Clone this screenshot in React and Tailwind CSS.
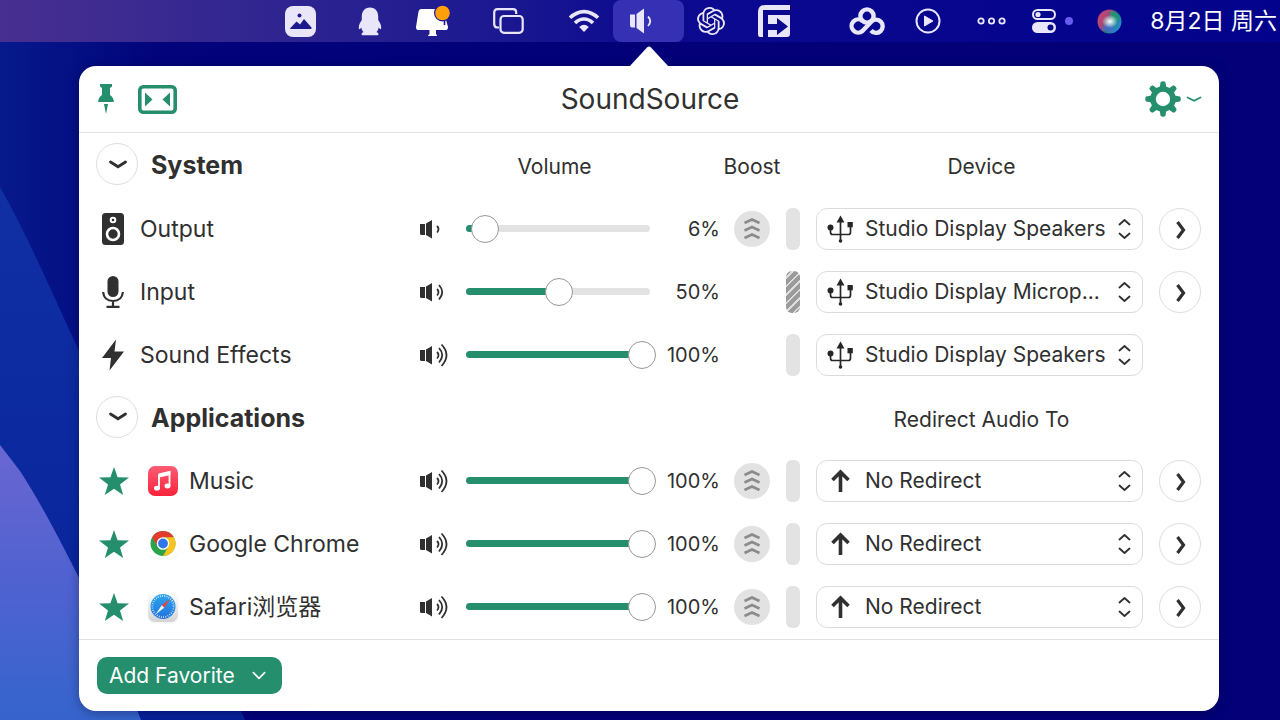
import { useState } from 'react'
import { SiOpenai } from 'react-icons/si'

const systemRows = [
  { id: 'output', label: 'Output', icon: 'speaker', volume: 6, boost: true, meter: 'idle', device: 'Studio Display Speakers', more: true },
  { id: 'input', label: 'Input', icon: 'mic', volume: 50, boost: false, meter: 'off', device: 'Studio Display Microp...', more: true },
  { id: 'effects', label: 'Sound Effects', icon: 'bolt', volume: 100, boost: false, meter: 'idle', device: 'Studio Display Speakers', more: false },
]

const appRows = [
  { id: 'music', label: 'Music', app: 'music', volume: 100 },
  { id: 'chrome', label: 'Google Chrome', app: 'chrome', volume: 100 },
  { id: 'safari', label: 'Safari浏览器', app: 'safari', volume: 100 },
]

const rowGrid = 'grid grid-cols-[minmax(0,1fr)_41px_195px_64px_64px_32px_327px_58px] items-center'

const Wallpaper = () => (
  <svg className="absolute inset-0 -z-10 h-full w-full" viewBox="0 0 1280 720" preserveAspectRatio="none" aria-hidden="true">
    <defs>
      <linearGradient id="wallBase" x1="0" y1="0" x2="1" y2="0">
        <stop offset="0" stopColor="#061a8c" />
        <stop offset="0.12" stopColor="#02047c" />
        <stop offset="0.5" stopColor="#030078" />
        <stop offset="1" stopColor="#030078" />
      </linearGradient>
      <linearGradient id="wallMid" x1="0" y1="0" x2="0" y2="1">
        <stop offset="0" stopColor="#1030a4" />
        <stop offset="1" stopColor="#07229a" />
      </linearGradient>
      <linearGradient id="wallFront" x1="0" y1="0" x2="0" y2="1">
        <stop offset="0" stopColor="#6a66d2" />
        <stop offset="0.5" stopColor="#4f62d0" />
        <stop offset="1" stopColor="#3565cc" />
      </linearGradient>
    </defs>
    <rect width="1280" height="720" fill="url(#wallBase)" />
    <path d="M0 187C30 240 55 300 80 353C130 450 190 590 245 720H0Z" fill="url(#wallMid)" />
    <path d="M0 445L20 471C45 510 65 550 80 580C105 630 125 680 141 720H0Z" fill="url(#wallFront)" />
  </svg>
)

const MenuBar = () => (
  <header className="flex h-[42px] items-center justify-end bg-linear-to-r from-[#472f90] via-[#0d0a90] via-50% to-[#02028c] pr-[3px] text-[#e8e6f8]">
    <button aria-label="Photos" className="mr-[42px]">
      <svg width="31" height="31" viewBox="0 0 31 31">
        <rect width="31" height="31" rx="8" fill="currentColor" />
        <circle cx="14.500" cy="9.500" r="2" fill="#1d1a8e" />
        <path d="M5 22.500L11.500 15.500L15 18.500L19 13L26.500 21.500Q27 23 25.500 23H5.500Z" fill="#1d1a8e" />
      </svg>
    </button>
    <button aria-label="Chat" className="mr-[34px]">
      <svg width="24" height="29" viewBox="0 0 24 29">
        <path d="M12 0.500C6.500 0.500 3.800 4.500 3.800 9.500V13C2 15.500 0.500 18.500 0.800 21.500C1 23 2.200 22 3.300 20.500C3.700 22.500 4.500 24 5.500 25C3.500 25.800 3 27 4 28.300H20C21 27 20.500 25.800 18.500 25C19.500 24 20.300 22.500 20.700 20.500C21.800 22 23 23 23.200 21.500C23.500 18.500 22 15.500 20.200 13V9.500C20.200 4.500 17.500 0.500 12 0.500Z" fill="currentColor" />
      </svg>
    </button>
    <button aria-label="Display" className="mr-[43px]">
      <svg width="34" height="32" viewBox="0 0 34 32">
        <path d="M5 4H27L32 22Q32 25 30 25H20V29Q21 30 21 31H12Q12 30 13.500 29V25H2Q0 25 0 22L2.500 6.500Q3 4 5 4Z" fill="#fff" />
        <path d="M28.500 15V20" stroke="#1b178f" strokeWidth="1.600" />
        <circle cx="26.500" cy="8" r="8.500" fill="#1b178f" />
        <circle cx="26.500" cy="8" r="7.300" fill="#ff9f0a" />
      </svg>
    </button>
    <button aria-label="Windows" className="mr-[44px]">
      <svg width="31" height="26" viewBox="0 0 31 26" fill="none" stroke="currentColor" strokeWidth="2.200">
        <path d="M6 19.500H4.500Q1.200 19.500 1.200 16V4.500Q1.200 1.200 4.500 1.200H20Q23.200 1.200 23.200 4.500V6" />
        <rect x="7.500" y="8" width="22.200" height="16.800" rx="3.500" />
      </svg>
    </button>
    <button aria-label="Wi-Fi" className="mr-[13px]">
      <svg width="32" height="24" viewBox="0 0 32 24" fill="none" stroke="currentColor" strokeWidth="3.600">
        <path d="M2 8.800Q8.500 2.600 16 2.600T30 8.800" />
        <path d="M7 14Q11 10 16 10T25 14" />
        <path d="M11.200 18Q16 13.600 20.800 18L16 23Z" fill="currentColor" stroke="none" />
      </svg>
    </button>
    <button aria-label="SoundSource" className="mr-[13px] flex h-[42px] w-[71px] items-center rounded-lg bg-[#3530b4] pl-[17px]">
      <svg width="24" height="26" viewBox="0 0 24 26" fill="none">
        <path d="M0 6.500H5V19.500H2Q0 19.500 0 17Z" fill="currentColor" />
        <path d="M6.500 6L14 0.500V25.500L6.500 20Z" fill="currentColor" />
        <path d="M18 8.500Q22.500 13 18 18" stroke="currentColor" strokeWidth="1.800" />
      </svg>
    </button>
    <button aria-label="ChatGPT" className="mr-[33px]">
      <SiOpenai className="h-7 w-7" />
    </button>
    <button aria-label="Sidebar" className="mr-[58px]">
      <svg width="33" height="33" viewBox="0 0 33 33" fill="currentColor">
        <path d="M7 0H32V5H5V32H2Q0 32 0 29V7Q0 0 7 0Z" />
        <path d="M10 10H32V29Q32 32 29 32H10V25H19V30L30 21.500L19 13V19H10Z" />
      </svg>
    </button>
    <button aria-label="Cloud drive" className="mr-[30px]">
      <svg width="36" height="29" viewBox="0 0 36 29" fill="none" stroke="currentColor" strokeWidth="4.400">
        <circle cx="18" cy="9" r="6.600" />
        <path d="M13.500 14A6.600 6.600 0 1 0 13.500 24L22.500 14.500A6.600 6.600 0 1 1 22 23.500" />
      </svg>
    </button>
    <button aria-label="Play" className="mr-9">
      <svg width="26" height="26" viewBox="0 0 26 26" fill="none">
        <circle cx="13" cy="13" r="11.500" stroke="currentColor" strokeWidth="2" />
        <path d="M9.500 8L18 13L9.500 18Z" fill="currentColor" stroke="currentColor" strokeLinejoin="round" />
      </svg>
    </button>
    <button aria-label="More items" className="mr-[26px]">
      <svg width="29" height="8" viewBox="0 0 29 8" fill="none" stroke="currentColor" strokeWidth="1.800">
        <circle cx="4" cy="4" r="2.700" />
        <circle cx="14.500" cy="4" r="2.700" />
        <circle cx="25" cy="4" r="2.700" />
      </svg>
    </button>
    <button aria-label="Control Center" className="mr-6 flex items-center gap-[9px]">
      <svg width="24" height="24" viewBox="0 0 24 24" fill="none">
        <rect x="1" y="1" width="22" height="9" rx="4.500" stroke="currentColor" strokeWidth="2" />
        <circle cx="6" cy="5.500" r="2.600" fill="currentColor" />
        <rect y="13" width="24" height="11" rx="5.500" fill="currentColor" />
        <circle cx="18.500" cy="18.500" r="3" fill="#05038c" />
      </svg>
      <span className="h-2 w-2 rounded-full bg-[#675cf0]" />
    </button>
    <button aria-label="Siri" className="mr-7">
      <svg width="25" height="25" viewBox="0 0 25 25">
        <defs>
          <linearGradient id="siriRing" x1="0" y1="0.200" x2="1" y2="0.800">
            <stop offset="0" stopColor="#d8406e" />
            <stop offset="0.350" stopColor="#a04a78" />
            <stop offset="0.600" stopColor="#1c7f80" />
            <stop offset="1" stopColor="#2a8fe0" />
          </linearGradient>
          <radialGradient id="siriGlow">
            <stop offset="0" stopColor="#fff" />
            <stop offset="0.400" stopColor="#dff4f8" stopOpacity="0.700" />
            <stop offset="1" stopColor="#dff4f8" stopOpacity="0" />
          </radialGradient>
        </defs>
        <circle cx="12.500" cy="12.500" r="12" fill="url(#siriRing)" />
        <path d="M13 2Q21 2 22.500 11L14 11Z" fill="#1f9a72" opacity="0.800" />
        <path d="M5 19L12 13L19 21Q11 26 5 19Z" fill="#4a6ad8" opacity="0.700" />
        <ellipse cx="13" cy="12.500" rx="8" ry="6.500" fill="url(#siriGlow)" />
      </svg>
    </button>
    <time className="text-[23px] whitespace-nowrap text-white">8月2日 周六</time>
  </header>
)

const RowIcon = ({ name }) => {
  if (name === 'speaker') {
    return (
      <svg width="22" height="32" viewBox="0 0 22 32">
        <rect width="22" height="32" rx="3.500" fill="#303030" />
        <circle cx="11" cy="7" r="2.300" fill="none" stroke="#fff" strokeWidth="2" />
        <circle cx="11" cy="21" r="6" fill="none" stroke="#fff" strokeWidth="2.600" />
      </svg>
    )
  }
  if (name === 'mic') {
    return (
      <svg width="22" height="32" viewBox="0 0 22 32" fill="none" stroke="#303030" strokeWidth="2.200">
        <rect x="5.500" y="0" width="11" height="21" rx="5.500" fill="#303030" stroke="none" />
        <path d="M1.100 16Q2 25 11 25T20.900 16M11 25V31M4.500 30.800H17.500" />
      </svg>
    )
  }
  return (
    <svg width="22" height="32" viewBox="0 0 22 32">
      <path d="M14 0.500L0 19H9L7.500 31.500L22 12.500H12.500Z" fill="#303030" />
    </svg>
  )
}

const AppIcon = ({ name }) => {
  if (name === 'music') {
    return (
      <svg width="30" height="30" viewBox="0 0 30 30">
        <defs>
          <linearGradient id="musicBg" x1="0" y1="0" x2="0" y2="1">
            <stop offset="0" stopColor="#fb5c74" />
            <stop offset="1" stopColor="#fa233b" />
          </linearGradient>
        </defs>
        <rect width="30" height="30" rx="7" fill="url(#musicBg)" />
        <path d="M11 8.500L21.500 6V19.500M11 8.500V22" stroke="#fff" strokeWidth="1.800" fill="none" />
        <path d="M10.200 8L22.400 5.300V9L10.200 11.700Z" fill="#fff" />
        <ellipse cx="9" cy="22.200" rx="3" ry="2.400" fill="#fff" />
        <ellipse cx="19.500" cy="20" rx="3" ry="2.400" fill="#fff" />
      </svg>
    )
  }
  if (name === 'chrome') {
    return (
      <svg width="30" height="30" viewBox="0 0 30 30" className="drop-shadow-xs">
        <rect width="30" height="29" rx="7" fill="#fff" />
        <circle cx="15" cy="14.500" r="12.500" fill="#2ba24c" />
        <path d="M4.170 8.250A12.500 12.500 0 0 1 25.830 8.250H15L9.600 17.600Z" fill="#e33b2e" />
        <path d="M25.830 8.250A12.500 12.500 0 0 1 15 27L20.400 17.600L15 8.250Z" fill="#fcc31e" />
        <circle cx="15" cy="14.500" r="6.300" fill="#fff" />
        <circle cx="15" cy="14.500" r="4.900" fill="#2f76ea" />
      </svg>
    )
  }
  return (
    <svg width="30" height="30" viewBox="0 0 30 30" className="drop-shadow-xs">
      <defs>
        <linearGradient id="safariBg" x1="0" y1="0" x2="0" y2="1">
          <stop offset="0" stopColor="#fff" />
          <stop offset="1" stopColor="#d4d4d8" />
        </linearGradient>
        <linearGradient id="safariDial" x1="0" y1="0" x2="0" y2="1">
          <stop offset="0" stopColor="#2ea6ee" />
          <stop offset="1" stopColor="#2072dc" />
        </linearGradient>
      </defs>
      <rect width="30" height="30" rx="7" fill="url(#safariBg)" />
      <circle cx="15" cy="14.500" r="12.500" fill="url(#safariDial)" />
      <circle cx="15" cy="14.500" r="10.600" fill="none" stroke="#fff" strokeWidth="1.800" strokeDasharray="0.700 1.520" />
      <path d="M22.500 6.500L16.200 15.800L13.800 13.300Z" fill="#e8443a" />
      <path d="M7.500 22.500L16.200 15.800L13.800 13.300Z" fill="#f4f4f6" />
    </svg>
  )
}

const VolumeIcon = ({ level }) => (
  <svg width="30" height="24" viewBox="0 0 30 24" fill="none" stroke="#303030" strokeWidth="1.800">
    <path d="M0 7H5V18H1.500Q0 18 0 16.500Z" fill="#303030" stroke="none" />
    <path d="M6 6.500L12 3V21.500L6 18Z" fill="#303030" stroke="none" />
    <path d="M17 9Q20 12 17 15.500" />
    {level > 33 && <path d="M19 5Q25.500 12 19 19.500" />}
    {level > 66 && <path d="M21.500 1.500Q31.500 12 21.500 23" />}
  </svg>
)

const UsbIcon = () => (
  <svg width="26" height="28" viewBox="0 0 26 28" fill="none" stroke="#262626" strokeWidth="1.700">
    <path d="M13.500 5V26M3.500 13V17Q3.500 19.500 5.500 19.500H21.500Q23.500 19.500 23.500 17V9" />
    <path d="M9.500 7.500L13.500 0.500L17.500 7.500Z" fill="#262626" stroke="none" />
    <circle cx="3.500" cy="12.500" r="3" fill="#262626" stroke="none" />
    <rect x="20.500" y="7" width="5.300" height="5.300" fill="#262626" stroke="none" />
    <circle cx="13.500" cy="26" r="1.800" fill="#262626" stroke="none" />
  </svg>
)

const ArrowUpIcon = () => (
  <svg width="26" height="28" viewBox="0 0 26 28" fill="none" stroke="#303030" strokeWidth="3.600">
    <path d="M13.500 25V4.500M5.500 13L13.500 5L21.500 13" />
  </svg>
)

const VolumeSlider = ({ label, value, onChange }) => (
  <div className="grid items-center">
    <div className="col-start-1 row-start-1 mr-[6px] ml-[5px] h-[7px] overflow-hidden rounded-full bg-[#e3e3e3]">
      <div className="h-full bg-[#258e6d]" style={{ width: `${value}%` }} />
    </div>
    <input
      type="range"
      min="0"
      max="100"
      value={value}
      onChange={(e) => onChange(Number(e.target.value))}
      aria-label={`${label} volume`}
      className="col-start-1 row-start-1 h-7 w-full cursor-pointer appearance-none bg-transparent [&::-webkit-slider-thumb]:h-7 [&::-webkit-slider-thumb]:w-7 [&::-webkit-slider-thumb]:appearance-none [&::-webkit-slider-thumb]:rounded-full [&::-webkit-slider-thumb]:border [&::-webkit-slider-thumb]:border-[#979797] [&::-webkit-slider-thumb]:bg-white"
    />
  </div>
)

const BoostButton = ({ label }) => (
  <button aria-label={`Boost ${label}`} className="flex h-9 w-9 items-center justify-center justify-self-center rounded-full bg-[#e2e2e2]">
    <svg width="18" height="22" viewBox="0 0 18 22" fill="none" stroke="#8b8b8b" strokeWidth="2.600">
      <path d="M1.500 5L9 1.500L16.500 5M1.500 12.500L9 9L16.500 12.500M1.500 20L9 16.500L16.500 20" />
    </svg>
  </button>
)

const Meter = ({ type }) => (
  <div
    className={
      type === 'off'
        ? 'ml-0.5 h-[42px] w-[14px] rounded-[6px] bg-[repeating-linear-gradient(135deg,#9b9b9b_0px,#9b9b9b_4px,#dedede_4px,#dedede_6px)]'
        : 'ml-0.5 h-[42px] w-[14px] rounded-[6px] bg-[#e3e3e3]'
    }
  />
)

const DeviceSelect = ({ label, value, icon }) => (
  <div className="relative">
    <select
      aria-label={`${label} device`}
      defaultValue={value}
      className="h-[42px] w-full appearance-none rounded-[11px] border border-[#dcdcdc] bg-white pr-8 pl-12 text-[21px] text-[#303030]"
    >
      <option>{value}</option>
    </select>
    <span className="pointer-events-none absolute inset-y-0 left-[11px] flex items-center">{icon}</span>
    <svg className="pointer-events-none absolute top-[11px] right-[12px]" width="13" height="20" viewBox="0 0 13 20" fill="none" stroke="#303030" strokeWidth="1.800" strokeLinecap="round" strokeLinejoin="round">
      <path d="M1.500 5.500L6.500 1L11.500 5.500M1.500 14.500L6.500 19L11.500 14.500" />
    </svg>
  </div>
)

const MoreButton = ({ label }) => (
  <button aria-label={`${label} options`} className="flex h-[42px] w-[42px] items-center justify-center justify-self-end rounded-full border border-[#dedede] bg-white pt-0.5 pl-0.5">
    <svg width="10" height="18" viewBox="0 0 10 18" fill="none" stroke="#303030" strokeWidth="3.200">
      <path d="M1.500 1L7.500 9L1.500 17" />
    </svg>
  </button>
)

const SectionTitle = ({ title }) => (
  <div className="flex items-center gap-[13px] pb-0.5">
    <button aria-label={`Collapse ${title}`} className="flex h-[42px] w-[42px] shrink-0 items-center justify-center rounded-full border border-[#dedede] pl-0.5">
      <svg width="18" height="9" viewBox="0 0 18 9" fill="none" stroke="#303030" strokeWidth="2.800" strokeLinecap="round">
        <path d="M1.500 2L9 6.800L16.500 2" />
      </svg>
    </button>
    <h2 className="pt-1 text-[25px] font-bold whitespace-nowrap">{title}</h2>
  </div>
)

export default function App() {
  const [volumes, setVolumes] = useState(() =>
    Object.fromEntries([...systemRows, ...appRows].map((row) => [row.id, row.volume]))
  )

  const renderControls = (row, device, icon, meter, boost, more) => (
    <>
      <VolumeIcon level={volumes[row.id]} />
      <VolumeSlider label={row.label} value={volumes[row.id]} onChange={(v) => setVolumes({ ...volumes, [row.id]: v })} />
      <span className="text-right text-[20px]">{volumes[row.id]}%</span>
      {boost ? <BoostButton label={row.label} /> : <span />}
      <Meter type={meter} />
      <DeviceSelect label={row.label} value={device} icon={icon} />
      {more && <MoreButton label={row.label} />}
    </>
  )

  return (
    <div className="relative isolate min-h-screen overflow-hidden pb-[9px] font-['Inter','Noto_Sans_CJK_SC',sans-serif] text-[#303030]">
      <Wallpaper />
      <MenuBar />

      <main className="relative mt-6 mr-[61px] ml-[79px] rounded-[17px] bg-white shadow-[0_2px_12px_rgba(0,0,40,0.35)]">
        <svg className="absolute -top-5 left-[550px]" width="40" height="21" viewBox="0 0 40 21" aria-hidden="true">
          <path d="M0 21L18 1.500Q20 -0.500 22 1.500L40 21Z" fill="#fff" />
        </svg>

        {/* Title bar */}
        <div className="grid h-[67px] grid-cols-[1fr_auto_1fr] items-center border-b border-[#e2e2e2] pr-[17px] pl-[19px]">
          <div className="flex items-center gap-6 text-[#258e6d]">
            <button aria-label="Pin window">
              <svg width="16" height="30" viewBox="0 0 16 30" fill="currentColor">
                <path d="M2 0H14V2.500L12 4V11Q16 14 15.800 18H0.200Q0 14 4 11V4L2 2.500ZM6 20H10L8 30Z" />
              </svg>
            </button>
            <button aria-label="Compact view">
              <svg width="39" height="29" viewBox="0 0 39 29">
                <rect x="1.800" y="1.800" width="35.400" height="25.400" rx="3.500" fill="none" stroke="currentColor" strokeWidth="3.600" />
                <path d="M7 7.500L14.500 14.500L7 21.500ZM32 7.500L24.500 14.500L32 21.500Z" fill="currentColor" />
              </svg>
            </button>
          </div>
          <h1 className="text-[28px]">SoundSource</h1>
          <button aria-label="Settings" className="flex items-center gap-[5px] justify-self-end text-[#258e6d]">
            <svg width="36" height="36" viewBox="-18 -18 36 36">
              <circle r="10" fill="none" stroke="currentColor" strokeWidth="5.600" />
              {[0, 45, 90, 135, 180, 225, 270, 315].map((angle) => (
                <path key={angle} d="M-3.400 -11L-2.400 -17Q0 -18.600 2.400 -17L3.400 -11Z" fill="currentColor" transform={`rotate(${angle})`} />
              ))}
            </svg>
            <svg width="16" height="7" viewBox="0 0 16 7" fill="none" stroke="currentColor" strokeWidth="1.800" strokeLinecap="round" strokeLinejoin="round">
              <path d="M1.500 1.500L8 4.800L14.500 1.500" />
            </svg>
          </button>
        </div>

        <div className="pr-[18px] pb-px pl-[17px]">
          <section>
            <div className={`${rowGrid} h-16`}>
              <SectionTitle title="System" />
              <span />
              <span className="pt-1 pr-2 text-center text-[21px]">Volume</span>
              <span className="col-start-5 pt-1 text-center text-[21px]">Boost</span>
              <span className="col-start-7 pt-1 pl-1 text-center text-[21px]">Device</span>
            </div>
            {systemRows.map((row) => (
              <div key={row.id} className={`${rowGrid} h-[63px]`}>
                <div className="flex items-center gap-4 pl-[6px] text-[23px]">
                  <RowIcon name={row.icon} />
                  <span className="pt-0.5">{row.label}</span>
                </div>
                {renderControls(row, row.device, <UsbIcon />, row.meter, row.boost, row.more)}
              </div>
            ))}
          </section>

          <section>
            <div className={`${rowGrid} h-[63px]`}>
              <SectionTitle title="Applications" />
              <span className="col-start-7 pt-1 pl-1 text-center text-[21px]">Redirect Audio To</span>
            </div>
            {appRows.map((row) => (
              <div key={row.id} className={`${rowGrid} h-[63px]`}>
                <div className="flex items-center text-[23px]">
                  <button aria-label={`Unfavorite ${row.label}`} className="mr-[19px] ml-[3px]">
                    <svg width="30" height="28" viewBox="0 0 30 28" fill="#258e6d">
                      <path d="M15 0L18.600 10.300L30 10.600L21 17.400L24.200 28L15 21.700L5.800 28L9 17.400L0 10.600L11.400 10.300Z" />
                    </svg>
                  </button>
                  <AppIcon name={row.app} />
                  <span className="pt-0.5 pl-[11px]">{row.label}</span>
                </div>
                {renderControls(row, 'No Redirect', <ArrowUpIcon />, 'idle', true, true)}
              </div>
            ))}
          </section>
        </div>

        <footer className="border-t border-[#dfe2e2] px-[18px] py-[17px]">
          <button className="flex h-[37px] items-center gap-[17px] rounded-[10px] bg-[#258e6d] pr-4 pl-3 text-[21px] text-white">
            Add Favorite
            <svg width="14" height="9" viewBox="0 0 15 9" fill="none" stroke="#fff" strokeWidth="1.800" strokeLinecap="round" strokeLinejoin="round">
              <path d="M1.500 1.500L7.500 7.500L13.500 1.500" />
            </svg>
          </button>
        </footer>
      </main>
    </div>
  )
}
